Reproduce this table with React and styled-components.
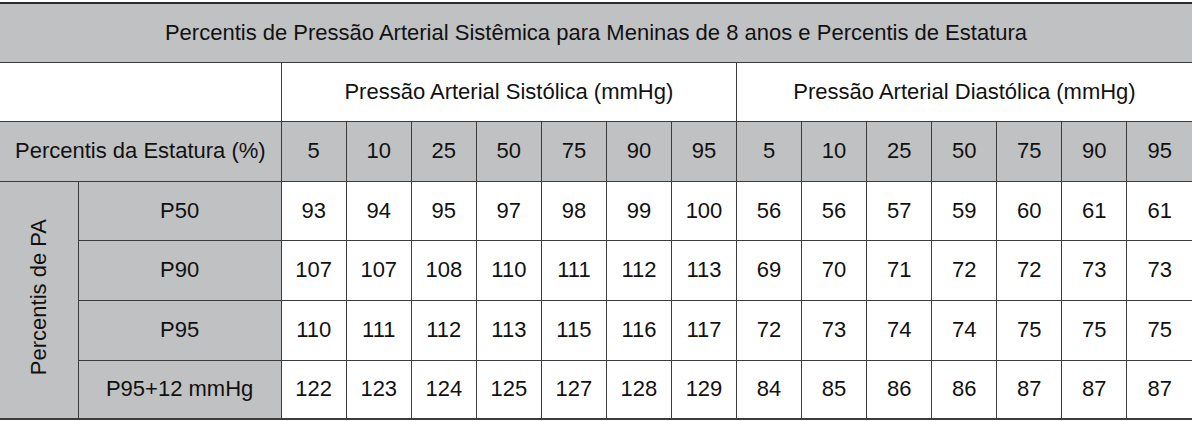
import React from 'react';
import styled, { createGlobalStyle } from 'styled-components';

const GlobalStyle = createGlobalStyle`
  html, body {
    margin: 0;
    padding: 0;
    background: #ffffff;
  }
  body {
    font-family: "Liberation Sans", Arial, sans-serif;
    color: #111111;
  }
`;

const sistolica = [5, 10, 25, 50, 75, 90, 95];

const rows = [
  { label: 'P50', h: 59, values: [93, 94, 95, 97, 98, 99, 100, 56, 56, 57, 59, 60, 61, 61] },
  { label: 'P90', h: 60, values: [107, 107, 108, 110, 111, 112, 113, 69, 70, 71, 72, 72, 73, 73] },
  { label: 'P95', h: 60, values: [110, 111, 112, 113, 115, 116, 117, 72, 73, 74, 74, 75, 75, 75] },
  { label: 'P95+12 mmHg', h: 59, values: [122, 123, 124, 125, 127, 128, 129, 84, 85, 86, 86, 87, 87, 87] },
];

export default function App() {
  return (
    <>
      <GlobalStyle />
      <Wrapper>
        <Table>
          <colgroup>
            <col style={{ width: 78 }} />
            <col style={{ width: 203 }} />
            {sistolica.concat(sistolica).map((_, i) => (
              <col key={i} style={{ width: 65 }} />
            ))}
          </colgroup>
          <tbody>
            <Row $h={59}>
              <Cell colSpan={16} $shade $noSides $top>
                Percentis de Pressão Arterial Sistêmica para Meninas de 8 anos e Percentis de Estatura
              </Cell>
            </Row>
            <Row $h={59}>
              <Cell colSpan={2} $noLeft />
              <Cell colSpan={7}>Pressão Arterial Sistólica (mmHg)</Cell>
              <Cell colSpan={7} $noRight>Pressão Arterial Diastólica (mmHg)</Cell>
            </Row>
            <Row $h={60}>
              <Cell colSpan={2} $shade $noLeft>Percentis da Estatura (%)</Cell>
              {sistolica.concat(sistolica).map((p, i) => (
                <Cell key={i} $shade $noRight={i === 13}>{p}</Cell>
              ))}
            </Row>
            {rows.map((r, ri) => (
              <Row key={r.label} $h={r.h}>
                {ri === 0 && (
                  <Cell rowSpan={4} $shade $noLeft $bottom>
                    <Vertical>Percentis de PA</Vertical>
                  </Cell>
                )}
                <Cell $shade $bottom={ri === 3}>{r.label}</Cell>
                {r.values.map((v, i) => (
                  <Cell key={i} $noRight={i === 13} $bottom={ri === 3}>{v}</Cell>
                ))}
              </Row>
            ))}
          </tbody>
        </Table>
      </Wrapper>
    </>
  );
}

const Wrapper = styled.div`
  padding-top: 2px;
  width: 1199px;
`;

const Table = styled.table`
  width: 1192px;
  table-layout: fixed;
  border-collapse: collapse;
  font-size: 22px;
`;

const Row = styled.tr`
  height: ${p => p.$h}px;
`;

const Cell = styled.td`
  padding: 0;
  text-align: center;
  vertical-align: middle;
  background: ${p => (p.$shade ? '#c0c1c3' : '#ffffff')};
  border: 1px solid #3c3c3c;
  border-left: ${p => (p.$noLeft || p.$noSides ? 'none' : '1px solid #3c3c3c')};
  border-right: ${p => (p.$noRight || p.$noSides ? 'none' : '1px solid #3c3c3c')};
  border-top: ${p => (p.$top ? '2px solid #2a2a2a' : '1px solid #3c3c3c')};
  border-bottom: ${p => (p.$bottom ? '2px solid #3c3c3c' : '1px solid #3c3c3c')};
  white-space: nowrap;
`;

const Vertical = styled.div`
  display: inline-block;
  writing-mode: vertical-rl;
  transform: rotate(180deg);
`;
